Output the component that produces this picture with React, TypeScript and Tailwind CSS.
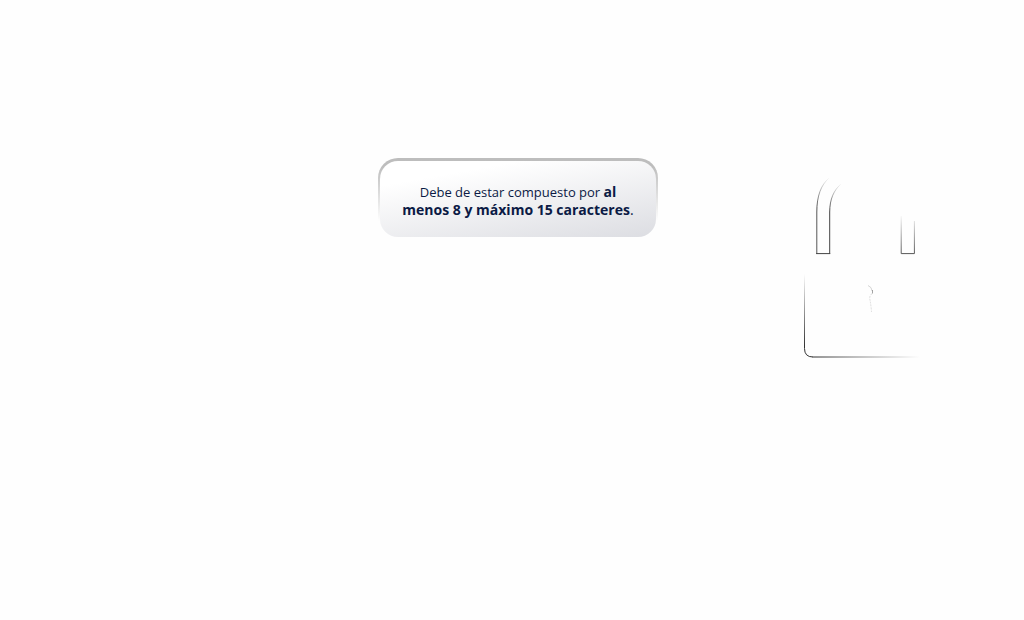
function Padlock() {
  return (
    <svg viewBox="0 0 120 184" className="h-[184px] w-[120px]" fill="none" aria-hidden="true">
      <defs>
        <linearGradient id="arcOuter" gradientUnits="userSpaceOnUse" x1="26" y1="1" x2="15" y2="32">
          <stop offset="0" stopColor="#555" stopOpacity="0" />
          <stop offset="1" stopColor="#555" />
        </linearGradient>
        <linearGradient id="arcInner" gradientUnits="userSpaceOnUse" x1="38" y1="7" x2="28" y2="36">
          <stop offset="0" stopColor="#444" stopOpacity="0" />
          <stop offset="1" stopColor="#444" />
        </linearGradient>
        <linearGradient id="rightLeg" gradientUnits="userSpaceOnUse" x1="0" y1="38" x2="0" y2="78">
          <stop offset="0" stopColor="#555" stopOpacity="0" />
          <stop offset="1" stopColor="#555" />
        </linearGradient>
        <linearGradient id="bodyLeft" gradientUnits="userSpaceOnUse" x1="0" y1="98" x2="0" y2="170">
          <stop offset="0" stopColor="#333" stopOpacity="0" />
          <stop offset="1" stopColor="#333" />
        </linearGradient>
        <linearGradient id="bodyBottom" gradientUnits="userSpaceOnUse" x1="14" y1="0" x2="118" y2="0">
          <stop offset="0" stopColor="#333" />
          <stop offset="1" stopColor="#333" stopOpacity="0" />
        </linearGradient>
      </defs>
      <path d="M14.8 78V36C14.8 20 19 9 27 2" stroke="url(#arcOuter)" />
      <path d="M27.7 78V36C27.7 23 32 14 39 8" stroke="url(#arcInner)" />
      <path d="M14.2 77.6H28.2" stroke="#444" />
      <path d="M99.2 40V77.6H112.4V45" stroke="url(#rightLeg)" />
      <path d="M2.5 98V172.5Q2.5 181 11 181" stroke="url(#bodyLeft)" />
      <path d="M10.5 181H118" stroke="url(#bodyBottom)" />
      <path d="M66 109.5Q70 111 70 115" stroke="#aaa" strokeWidth="0.5" />
      <path d="M70.5 114V117.5" stroke="#666" strokeWidth="0.6" />
      <path d="M70 117.5Q67 120 68 124Q69 129 69.5 136" stroke="#bbb" strokeWidth="0.5" strokeDasharray="2 1" />
    </svg>
  );
}

export default function App() {
  return (
    <main className="grid min-h-screen grid-cols-[378fr_280fr_366fr] items-start bg-[#fefefe] pt-[158px]">
      <section className="col-start-2 rounded-[20px] bg-linear-to-b from-[#bdbdbd] from-10% to-[#fefefe] to-80% px-[2px] pt-[3px]">
        <div className="flex h-[76px] items-center justify-center rounded-[18px] bg-linear-[170deg] from-white from-20% to-[#dcdde2] px-5 pt-[2px]">
          <p className="text-center font-['Open_Sans','Noto_Sans',sans-serif] text-[14px] leading-[17px] text-[#0b1a45]">
            <span className="text-[13px]">Debe de estar compuesto por </span>
            <strong className="font-bold">al<br />menos 8 y máximo 15 caracteres</strong>.
          </p>
        </div>
      </section>
      <div className="pt-[18px] pl-[144px]">
        <Padlock />
      </div>
    </main>
  );
}
